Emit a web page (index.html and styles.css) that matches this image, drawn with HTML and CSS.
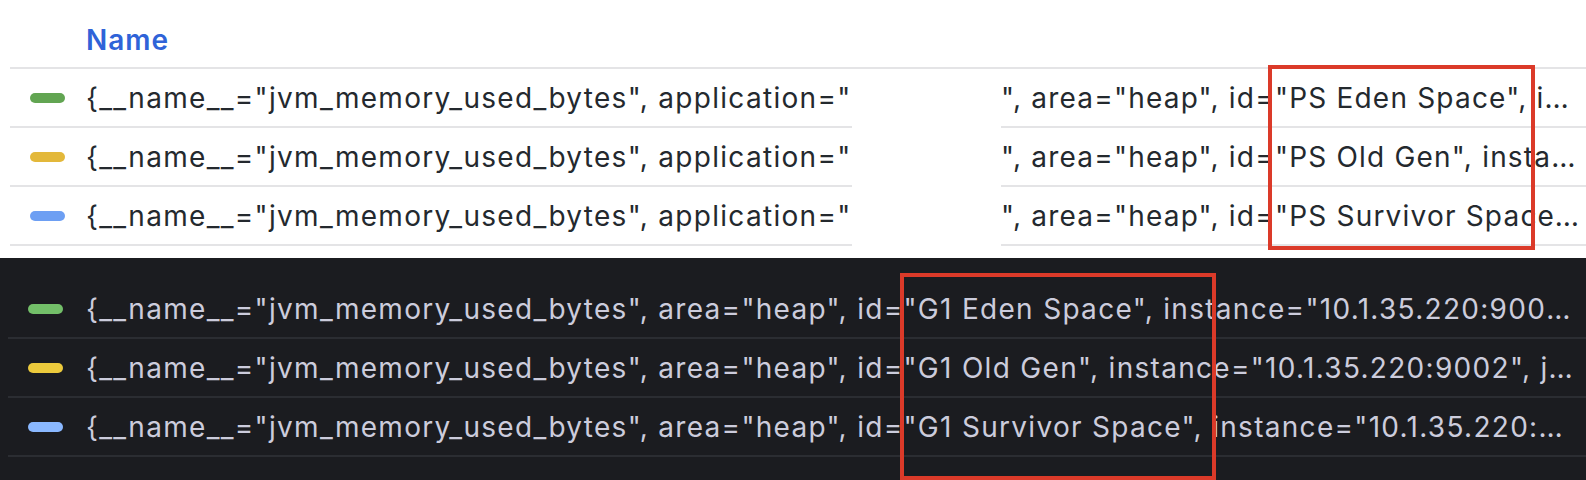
FILE: index.html
```html
<!DOCTYPE html>
<html>
<head>
<meta charset="utf-8">
<link rel="stylesheet" href="styles.css">
</head>
<body>
<section class="panel panel-light">
  <div class="legend">
    <div class="legend-head"><span class="head-name">Name</span></div>
    <div class="legend-row">
      <div class="cell cell-left"><span class="marker marker-green"></span><span class="label">{__name__="jvm_memory_used_bytes", application="</span></div>
      <div class="redact"></div>
      <div class="cell cell-right"><span class="label">", area="heap", id="PS Eden Space", instance="10.1.35.220:9002", job="app"}</span></div>
    </div>
    <div class="legend-row">
      <div class="cell cell-left"><span class="marker marker-yellow"></span><span class="label">{__name__="jvm_memory_used_bytes", application="</span></div>
      <div class="redact"></div>
      <div class="cell cell-right"><span class="label">", area="heap", id="PS Old Gen", instance="10.1.35.220:9002", job="app"}</span></div>
    </div>
    <div class="legend-row">
      <div class="cell cell-left"><span class="marker marker-blue"></span><span class="label">{__name__="jvm_memory_used_bytes", application="</span></div>
      <div class="redact"></div>
      <div class="cell cell-right"><span class="label">", area="heap", id="PS Survivor Space", instance="10.1.35.220:9002", job="app"}</span></div>
    </div>
  </div>
</section>
<section class="panel panel-dark">
  <div class="legend legend-dark">
    <div class="legend-row dark-row">
      <span class="marker marker-dgreen"></span><span class="label">{__name__="jvm_memory_used_bytes", area="heap", id="G1 Eden Space", instance="10.1.35.220:9002", job="app"}</span>
    </div>
    <div class="legend-row dark-row">
      <span class="marker marker-dyellow"></span><span class="label">{__name__="jvm_memory_used_bytes", area="heap", id="G1 Old Gen", instance="10.1.35.220:9002", job="app"}</span>
    </div>
    <div class="legend-row dark-row">
      <span class="marker marker-dblue"></span><span class="label">{__name__="jvm_memory_used_bytes", area="heap", id="G1 Survivor Space", instance="10.1.35.220:9002", job="app"}</span>
    </div>
  </div>
</section>
<div class="highlight highlight-top"></div>
<div class="highlight highlight-bottom"></div>
</body>
</html>
```
FILE: styles.css
```css
html, body {
  margin: 0;
  padding: 0;
}
body {
  width: 1586px;
  height: 480px;
  overflow: hidden;
  position: relative;
  font-family: Inter, "Noto Sans", sans-serif;
  font-size: 28px;
  letter-spacing: 1.3px;
}
.panel-light {
  background: #ffffff;
  height: 258px;
  box-sizing: border-box;
  padding-left: 10px;
}
.legend {
  display: flex;
  flex-direction: column;
}
.legend-head {
  height: 69px;
  box-sizing: border-box;
  padding-top: 12px;
  padding-left: 76px;
  display: flex;
  align-items: center;
  border-bottom: 2px solid #e4e4e6;
}
.head-name {
  color: #2f63d8;
  font-weight: 600;
  letter-spacing: 1px;
}
.legend-row {
  display: flex;
  height: 59px;
}
.cell {
  display: flex;
  align-items: center;
  box-sizing: border-box;
  border-bottom: 2px solid #e4e4e6;
  color: #24292e;
  white-space: nowrap;
  overflow: hidden;
  min-width: 0;
}
.cell-left {
  width: 842px;
  padding-left: 20px;
}
.redact {
  width: 149px;
  flex: none;
}
.cell-right {
  flex: 1;
  padding-right: 0;
}
.cell-right .label {
  letter-spacing: 1.2px;
}
.label {
  overflow: hidden;
  text-overflow: ellipsis;
  white-space: nowrap;
  min-width: 0;
}
.marker {
  flex: none;
  width: 35px;
  height: 10px;
  border-radius: 5px;
  margin-right: 21px;
}
.marker-green { background: #62a552; }
.marker-yellow { background: #e3b83a; }
.marker-blue { background: #6d9ff3; }

.panel-dark {
  background: #1b1c20;
  height: 222px;
  box-sizing: border-box;
  padding-top: 22px;
  padding-left: 8px;
}
.dark-row {
  align-items: center;
  box-sizing: border-box;
  padding-left: 20px;
  padding-right: 6px;
  border-bottom: 2px solid #2b2d32;
  color: #ccccdc;
  white-space: nowrap;
  overflow: hidden;
}
.dark-row .marker {
  margin-right: 23px;
}
.marker-dgreen { background: #73bf69; }
.marker-dyellow { background: #ecca3c; }
.marker-dblue { background: #8ab8ff; }

.highlight {
  position: absolute;
  box-sizing: border-box;
  border: 4px solid #db3a29;
}
.highlight-top {
  left: 1268px;
  top: 65px;
  width: 267px;
  height: 185px;
}
.highlight-bottom {
  left: 900px;
  top: 273px;
  width: 316px;
  height: 207px;
}
```
